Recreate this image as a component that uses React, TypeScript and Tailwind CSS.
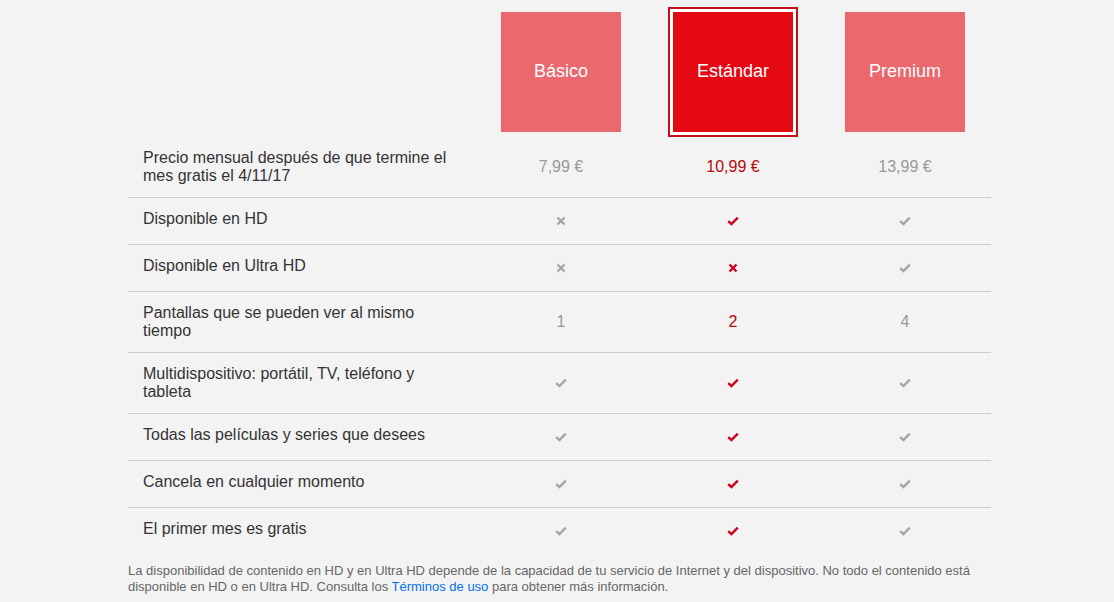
const plans = ['Básico', 'Estándar', 'Premium'];

type Cell = 'check' | 'cross' | string;

const rows: { label: string; cells: Cell[]; twoLines?: boolean }[] = [
  { label: 'Disponible en HD', cells: ['cross', 'check', 'check'] },
  { label: 'Disponible en Ultra HD', cells: ['cross', 'cross', 'check'] },
  { label: 'Pantallas que se pueden ver al mismo tiempo', cells: ['1', '2', '4'], twoLines: true },
  { label: 'Multidispositivo: portátil, TV, teléfono y tableta', cells: ['check', 'check', 'check'], twoLines: true },
  { label: 'Todas las películas y series que desees', cells: ['check', 'check', 'check'] },
  { label: 'Cancela en cualquier momento', cells: ['check', 'check', 'check'] },
  { label: 'El primer mes es gratis', cells: ['check', 'check', 'check'] },
];

const Check = ({ active }: { active: boolean }) => (
  <svg width="12" height="10" viewBox="0 0 12 10" className={active ? 'text-[#d0021b]' : 'text-[#a6a6a6]'}>
    <path d="M1.2 5.2 L4.4 8 L10.8 1.6" fill="none" stroke="currentColor" strokeWidth="2.4" />
  </svg>
);

const Cross = ({ active }: { active: boolean }) => (
  <svg width="10" height="10" viewBox="0 0 10 10" className={active ? 'text-[#d0021b]' : 'text-[#a6a6a6]'}>
    <path d="M1.5 1.5 L8.5 8.5 M8.5 1.5 L1.5 8.5" fill="none" stroke="currentColor" strokeWidth="2.4" />
  </svg>
);

const CellValue = ({ value, active }: { value: Cell; active: boolean }) => {
  if (value === 'check') return <Check active={active} />;
  if (value === 'cross') return <Cross active={active} />;
  return <span className={active ? 'text-[#b9090b]' : 'text-[#999]'}>{value}</span>;
};

export default function App() {
  const selected = 1;
  return (
    <div className="min-h-screen bg-[#f3f3f3] font-['Liberation_Sans',Arial,sans-serif] text-[#333]">
      <div className="ml-[128px] w-[863px]">
        {/* plan boxes */}
        <div className="grid h-[137px] grid-cols-[347px_172px_172px_172px]">
          <div />
          {plans.map((p, i) =>
            i === selected ? (
              <div key={p} className="flex justify-center pt-[7px]">
                <div className="border-2 border-[#c11119] bg-white p-[3px]">
                  <div className="flex h-[120px] w-[120px] items-center justify-center bg-[#e50914] pb-0.5 text-[18px] text-white">
                    {p}
                  </div>
                </div>
              </div>
            ) : (
              <div key={p} className="flex justify-center pt-3">
                <div className="flex h-[120px] w-[120px] items-center justify-center bg-[#eb686f] pb-0.5 text-[18px] text-white">
                  {p}
                </div>
              </div>
            )
          )}
        </div>

        {/* price row */}
        <div className="grid h-[60px] grid-cols-[347px_172px_172px_172px] items-center text-[16px] leading-[18px]">
          <div className="pl-[15px] pr-6">Precio mensual después de que termine el mes gratis el 4/11/17</div>
          {['7,99 €', '10,99 €', '13,99 €'].map((v, i) => (
            <div key={v} className={`text-center ${i === selected ? 'text-[#b9090b]' : 'text-[#999]'}`}>
              {v}
            </div>
          ))}
        </div>

        {rows.map((r) => (
          <div
            key={r.label}
            className="grid grid-cols-[347px_172px_172px_172px] items-center border-t border-[#cccccc] text-[16px] leading-[18px]"
          >
            <div className={r.twoLines ? 'py-3 pl-[15px] pr-6' : 'pt-3 pb-4 pl-[15px] pr-6'}>{r.label}</div>
            {r.cells.map((c, i) => (
              <div key={i} className="flex justify-center">
                <CellValue value={c} active={i === selected} />
              </div>
            ))}
          </div>
        ))}

        <p className="mt-[9px] text-[13px] leading-4 text-[#666]">
          La disponibilidad de contenido en HD y en Ultra HD depende de la capacidad de tu servicio de Internet y del
          dispositivo. No todo el contenido está
          <br />
          disponible en HD o en Ultra HD. Consulta los <a className="text-[#0071eb]">Términos de uso</a> para obtener
          más información.
        </p>
      </div>
    </div>
  );
}
